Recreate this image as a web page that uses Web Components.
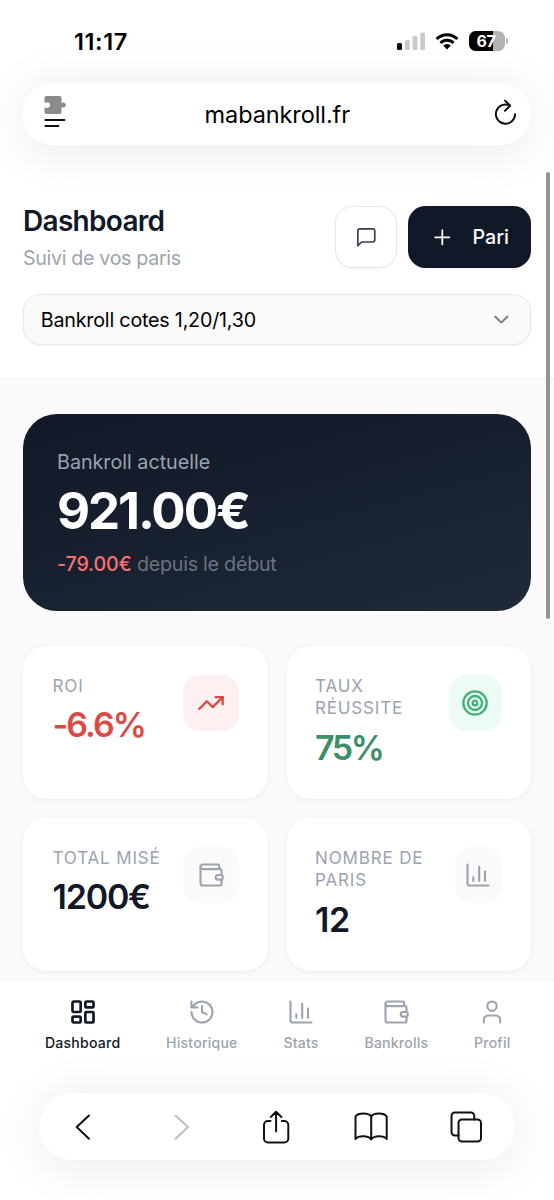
<!DOCTYPE html>
<html lang="fr">
<head>
<meta charset="utf-8">
<title>mabankroll.fr</title>
<style>
  html, body { margin: 0; height: 1200px; overflow: hidden; background: #fff; }
  body { font-family: Inter, "Open Sans", sans-serif; color: #000; }
</style>
</head>
<body>
<phone-screen></phone-screen>
<script>
const define = (tag, css, html, setup) => {
  const template = document.createElement('template');
  template.innerHTML = `<style>*{box-sizing:border-box}${css}</style>${html}`;
  customElements.define(tag, class extends HTMLElement {
    constructor() {
      super();
      this.attachShadow({ mode: 'open' }).append(template.content.cloneNode(true));
    }
    connectedCallback() { if (setup) setup(this, this.shadowRoot); }
  });
};

/* Line icons on a 24-unit grid */
const ICONS = {
  message: '<path d="M21 15a2 2 0 0 1-2 2H7l-4 4V5a2 2 0 0 1 2-2h14a2 2 0 0 1 2 2z"/>',
  plus: '<path d="M4.5 12h15M12 4.5v15"/>',
  chevron: '<path d="m5.5 9 6.5 6.5L18.500 9"/>',
  trend: '<path d="M22 7l-8.500 8.500-5-5L2 17"/><path d="M16 7h6v6"/>',
  target: '<circle cx="12" cy="12" r="10"/><circle cx="12" cy="12" r="6"/><circle cx="12" cy="12" r="2"/>',
  wallet: '<path d="M19 7V4a1 1 0 0 0-1-1H5a2 2 0 0 0 0 4h15a1 1 0 0 1 1 1v4h-3a2 2 0 0 0 0 4h3a1 1 0 0 0 1-1v-2a1 1 0 0 0-1-1"/><path d="M3 5v14a2 2 0 0 0 2 2h15a1 1 0 0 0 1-1v-4"/>',
  bars: '<path d="M3 3v16a2 2 0 0 0 2 2h16M18 17V9M13 17V5M8 17v-3"/>',
  grid: '<rect x="3" y="3" width="7" height="9" rx="1"/><rect x="14" y="3" width="7" height="5" rx="1"/><rect x="14" y="12" width="7" height="9" rx="1"/><rect x="3" y="16" width="7" height="5" rx="1"/>',
  history: '<path d="M3 12a9 9 0 1 0 9-9 9.750 9.750 0 0 0-6.740 2.740L3 8"/><path d="M3 3v5h5M12 7v5l4 2"/>',
  user: '<path d="M19 21v-2a4 4 0 0 0-4-4H9a4 4 0 0 0-4 4v2"/><circle cx="12" cy="7" r="4"/>'
};
define('line-icon', `
  :host { display: block; flex: none; }
  svg { display: block; fill: none; stroke: currentColor; stroke-linecap: round; stroke-linejoin: round; overflow: visible; }`,
  '<svg viewBox="0 0 24 24"></svg>',
  (el, root) => {
    const svg = root.querySelector('svg'), size = el.getAttribute('size') || 28;
    svg.setAttribute('width', size);
    svg.setAttribute('height', size);
    svg.setAttribute('stroke-width', el.getAttribute('weight') || 2);
    svg.innerHTML = ICONS[el.getAttribute('name')];
  });

define('battery-level', `
  :host { display: flex; align-items: center; gap: 1px; }
  .cell { width: 36px; height: 20px; border-radius: 6.500px; background: linear-gradient(90deg, #000 67%, #b3b3b3 67%);
    color: #fff; font-weight: 700; font-size: 16px; line-height: 20px; text-align: center; letter-spacing: -.3px; padding-right: 2px; }
  .tip { width: 2px; height: 6px; border-radius: 0 2px 2px 0; background: #b3b3b3; }`,
  '<div class="cell"><slot></slot></div><div class="tip"></div>');

define('status-bar', `
  :host { display: flex; height: 83px; padding: 0 46px 0 74px; justify-content: space-between; align-items: flex-start; }
  .time { font-weight: 600; font-size: 23.500px; line-height: 28px; margin-top: 27.500px; letter-spacing: .6px; }
  .right { display: flex; align-items: center; margin-top: 31px; height: 20px; }
  svg { display: block; }`,
  `<div class="time">11:17</div>
  <div class="right">
    <svg width="28" height="18" viewBox="0 0 28 18"><rect x="0" y="11" width="5" height="7" rx="1.500"/><g fill="#cbcbcb"><rect x="7.800" y="8" width="5" height="10" rx="1.500"/><rect x="15.500" y="4" width="5" height="14" rx="1.500"/><rect x="23.200" y=".5" width="4.800" height="17.500" rx="1.500"/></g></svg>
    <svg style="margin:0 10px 0 10px" width="24" height="18" viewBox="0 0 24 18"><g fill="none" stroke="#000" stroke-width="3.100"><path d="M1.600 7a14.700 14.700 0 0 1 20.800 0"/><path d="M5.500 11a9.200 9.200 0 0 1 13 0"/></g><path d="M8.200 13.600a5.400 5.400 0 0 1 7.600 0L12 17.600z"/></svg>
    <battery-level>67</battery-level>
  </div>`);

define('address-bar', `
  :host { display: flex; align-items: center; justify-content: space-between; flex: none; position: relative; z-index: 2;
    height: 62px; margin: 0 23px 0 22px; padding: 0 12.500px 0 22px; border-radius: 31px; background: #fff; box-shadow: 0 5px 52px rgba(0,0,0,.085); }
  .url { font-size: 23.500px; line-height: 30px; letter-spacing: -.1px; margin-left: -6px; margin-top: 1px; }
  svg { display: block; }
  .page { margin-bottom: 4px; }`,
  `<svg class="page" width="23" height="34" viewBox="0 0 23 34"><path fill="#8b8b8b" d="M2.500 1h13a2 2 0 0 1 2 2v5l1-.5a2.600 2.600 0 1 1 0 5l-1-.3V17a2 2 0 0 1-2 2h-13a2 2 0 0 1-2-2v-4.600h1.200a2.800 2.800 0 1 0 0-4.600H.5V3a2 2 0 0 1 2-2z"/><path d="M1.400 25h19M1.400 31h13" stroke="#111" stroke-width="2" stroke-linecap="round"/></svg>
  <div class="url"><slot></slot></div>
  <svg width="25" height="30" viewBox="0 0 25 30" fill="none" stroke="#111" stroke-width="2" stroke-linecap="round" stroke-linejoin="round"><path d="M17 6.600A9.600 9.600 0 1 0 22.100 15.300"/><path d="M12 1.600l5.200 5-5.200 5.200"/></svg>`);

define('title-block', `
  :host { display: block; }
  h1 { margin: 0; font-weight: 600; font-size: 28px; line-height: 34px; color: #111827; letter-spacing: -.7px; }
  p { margin: 6px 0 0; font-size: 19.700px; line-height: 28px; color: #9ca3af; letter-spacing: -.35px; }`,
  '<h1><slot></slot></h1><p><slot name="sub"></slot></p>');

define('app-button', `
  :host { display: flex; align-items: center; justify-content: center; height: 62px; width: 62px; border-radius: 17.500px;
    border: 1.400px solid #e5e7eb; background: #fff; color: #374151; box-shadow: 0 1px 3px rgba(0,0,0,.05); }
  :host([primary]) { width: 123px; border: 0; background: #111827; color: #fff; gap: 19px; padding-left: 1px; font-size: 19.700px; font-weight: 450; line-height: 28px; }`,
  '<slot></slot>');

define('bankroll-select', `
  :host { display: flex; align-items: center; justify-content: space-between; height: 51px; margin-top: 22.500px; padding: 0 17.500px 0 16.800px;
    border: 1.400px solid #e5e7eb; border-radius: 17.500px; background: #fafafa; font-size: 19.700px; line-height: 28px; letter-spacing: -.2px; box-shadow: 0 1px 2px rgba(0,0,0,.05); }
  line-icon { color: #7b7b7d; margin-top: -1px; }`,
  '<span><slot></slot></span><line-icon name="chevron" size="22.600" weight="2"></line-icon>');

define('app-header', `
  :host { display: block; flex: none; height: 234px; padding: 59px 23px 0; border-bottom: 1px solid #f3f4f6; background: #fff; }
  .row { display: flex; height: 67.500px; }
  .actions { display: flex; gap: 11px; margin: 2px 0 0 auto; }`,
  `<div class="row">
    <title-block>Dashboard<span slot="sub">Suivi de vos paris</span></title-block>
    <div class="actions">
      <app-button><line-icon name="message" size="22.600" weight="1.800"></line-icon></app-button>
      <app-button primary><line-icon name="plus" size="22.600" weight="1.900"></line-icon><span>Pari</span></app-button>
    </div>
  </div>
  <bankroll-select>Bankroll cotes 1,20/1,30</bankroll-select>`);

define('balance-card', `
  :host { display: block; height: 197px; padding: 34px; border-radius: 34px; background: linear-gradient(165deg, #111827, #1f2937); font-size: 19.700px; line-height: 28px; color: #9ca3af; }
  .amount { margin: 6.500px 0 11px; font-weight: 700; font-size: 51px; line-height: 56px; color: #fff; letter-spacing: -2.100px; }
  .change { color: #6b7280; letter-spacing: -.25px; }
  .change b { font-weight: 500; color: #f87171; letter-spacing: -.15px; }`,
  `<div class="label">Bankroll actuelle</div>
  <div class="amount">921.00€</div>
  <div class="change"><b>-79.00€</b> <span>depuis le début</span></div>`);

define('stat-card', `
  :host { display: flex; justify-content: space-between; align-items: flex-start; height: 153px; padding: 28.500px 29px 0 29.500px; border-radius: 23px; background: #fff;
    box-shadow: 0 1px 4px rgba(30,41,90,.07); }
  .label { font-size: 17px; line-height: 22.600px; letter-spacing: .85px; color: #9ca3af; white-space: nowrap; }
  .value { margin-top: 11.200px; font-size: 34px; font-weight: 600; line-height: 34px; color: var(--value, #111827); letter-spacing: var(--track, -1.200px); }
  .badge { display: flex; align-items: center; justify-content: center; width: var(--badge, 56.500px); height: 56.500px; border-radius: 17px;
    background: var(--tint, #fafafa); color: var(--icon, #9ca3af); }`,
  '<div><div class="label"><slot name="label"></slot></div><div class="value"><slot></slot></div></div><div class="badge"><slot name="icon"></slot></div>');

define('app-main', `
  :host { display: block; flex: none; height: 601px; padding: 35px 23px 0; background: #fafafb; }
  .grid { display: grid; grid-template-columns: 245px 244.500px; justify-content: space-between; row-gap: 19px; margin-top: 35px; }
  stat-card:nth-child(even) { padding-left: 28.500px; }
  .roi { --value: #dc4a46; --icon: #dc4a46; --tint: #fdf0f0; --track: -2px; }
  .rate { --value: #3c8f67; --icon: #45b07a; --tint: #ecfbf4; --badge: 53px; --track: -2.400px; }
  .rate line-icon, .count line-icon { margin-right: 1.500px; }
  .count { --badge: 47px; --track: -.3px; }`,
  `<balance-card></balance-card>
  <div class="grid">
    <stat-card class="roi"><span slot="label">ROI</span>-6.6%<line-icon slot="icon" name="trend"></line-icon></stat-card>
    <stat-card class="rate"><span slot="label">TAUX<br>RÉUSSITE</span>75%<line-icon slot="icon" name="target"></line-icon></stat-card>
    <stat-card><span slot="label">TOTAL MISÉ</span>1200€<line-icon slot="icon" name="wallet" weight="1.800"></line-icon></stat-card>
    <stat-card class="count"><span slot="label">NOMBRE DE<br>PARIS</span>12<line-icon slot="icon" name="bars" weight="1.800"></line-icon></stat-card>
  </div>`);

define('nav-item', `
  :host { display: flex; flex-direction: column; align-items: center; color: #9ca3af; font-size: 14.100px; font-weight: 500; line-height: 20px; letter-spacing: .2px; white-space: nowrap; }
  :host([active]) { color: #111827; }
  .text { margin-top: 6.500px; }`,
  '<slot name="icon"></slot><span class="text"><slot></slot></span>');

define('bottom-nav', `
  :host { display: flex; flex: none; justify-content: space-between; height: 113px; padding: 17px 43.500px 0 45px; border-top: 1px solid #f3f4f6; background: #fff; }`,
  `<nav-item active><line-icon slot="icon" name="grid" weight="2.300"></line-icon>Dashboard</nav-item>
  <nav-item><line-icon slot="icon" name="history" weight="1.800"></line-icon>Historique</nav-item>
  <nav-item><line-icon slot="icon" name="bars" weight="1.800"></line-icon>Stats</nav-item>
  <nav-item><line-icon slot="icon" name="wallet" weight="1.800"></line-icon>Bankrolls</nav-item>
  <nav-item><line-icon slot="icon" name="user" weight="1.800"></line-icon>Profil</nav-item>`);

define('browser-toolbar', `
  :host { display: grid; grid-template-columns: repeat(5, 95.400px); justify-content: center; justify-items: center; align-items: center; flex: none;
    width: 476px; height: 67px; margin-left: 39px; border-radius: 34px; background: #fff; box-shadow: 0 5px 52px rgba(0,0,0,.085); position: relative; }
  svg { display: block; fill: none; stroke: #111; stroke-width: 2; stroke-linecap: round; stroke-linejoin: round; margin-right: 3px; }`,
  `<svg width="34" height="34" viewBox="0 0 34 34"><path d="M21 5.500 8.700 17 21 28.700"/></svg>
  <svg width="34" height="34" viewBox="0 0 34 34"><path stroke="#bdbdc1" d="M12.500 5.500 25 17 12.500 28.700"/></svg>
  <svg width="34" height="34" viewBox="0 0 34 34"><path d="M11.500 11H9a4 4 0 0 0-4 4v13.500a4 4 0 0 0 4 4h16.300a4 4 0 0 0 4-4V15a4 4 0 0 0-4-4H22.800M17.100 21.500V1.800M11.800 7l5.300-5.300L22.400 7"/></svg>
  <svg width="34" height="34" viewBox="0 0 34 34"><path d="M17.200 6.500v23M17.200 6.500C15 2.500 4 2.500 1.500 6.500V29c3.200-3.600 12.800-3.600 15.700.5 2.900-4.100 12.300-4.100 15.500-.5V6.500C30.200 2.500 19.400 2.500 17.200 6.500z"/></svg>
  <svg width="34" height="34" viewBox="0 0 34 34"><path d="M9.500 25.500H6a3.500 3.500 0 0 1-3.500-3.500V6A3.500 3.500 0 0 1 6 2.500h15.800A3.500 3.500 0 0 1 25.300 6v3.500"/><rect x="9.500" y="9.500" width="22.500" height="22" rx="3.500"/></svg>`);

define('phone-screen', `
  :host { display: flex; flex-direction: column; position: relative; width: 554px; height: 1200px; overflow: hidden; background: #fff; }
  .scrollbar { position: absolute; z-index: 3; left: 545.500px; top: 172px; width: 4.500px; height: 447px; border-radius: 3px; background: #939393; }`,
  `<status-bar></status-bar>
  <address-bar>mabankroll.fr</address-bar>
  <app-header></app-header>
  <app-main></app-main>
  <bottom-nav></bottom-nav>
  <browser-toolbar></browser-toolbar>
  <div class="scrollbar"></div>`);
</script>
</body>
</html>
